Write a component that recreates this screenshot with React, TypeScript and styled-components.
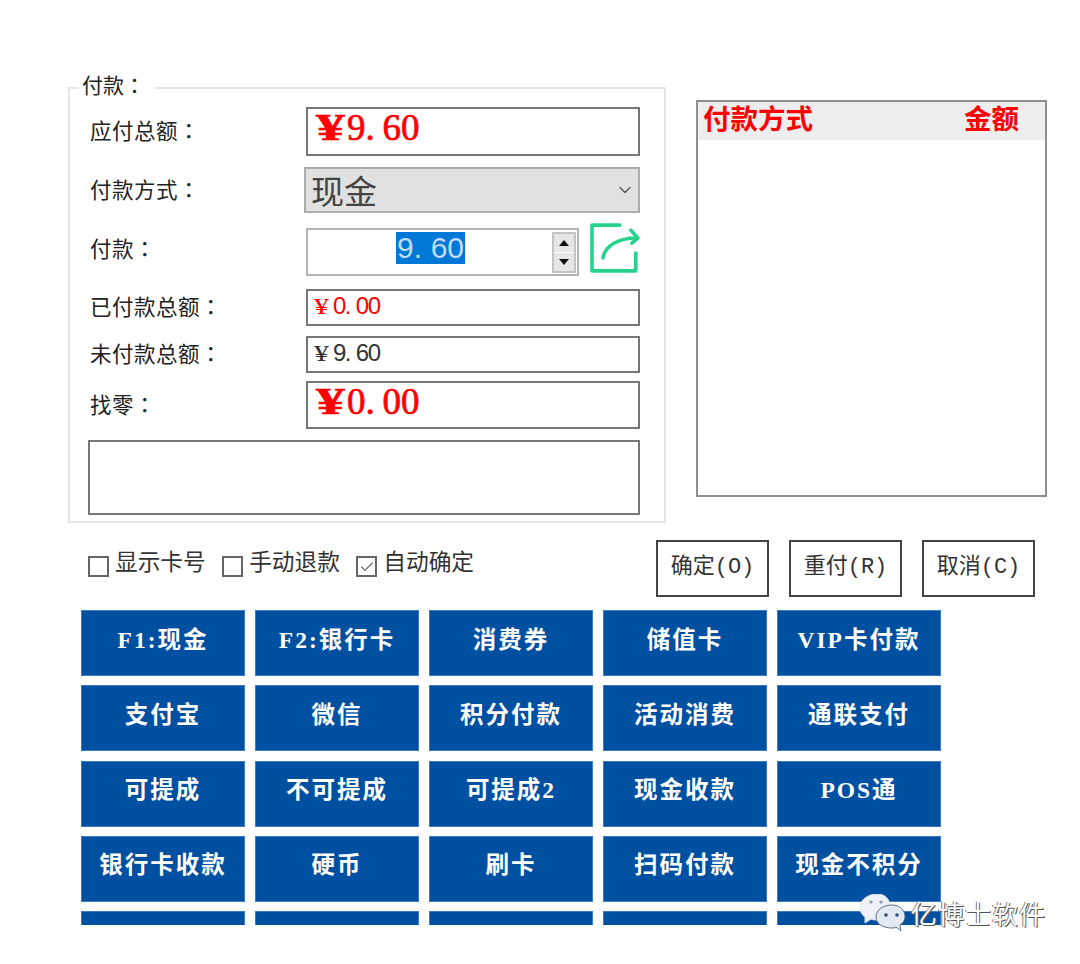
import React from 'react';
import styled, { createGlobalStyle } from 'styled-components';
import { ChevronDown, Check } from 'lucide-react';

const cjk = '"Noto Sans CJK SC", "Liberation Sans", sans-serif';
const cjkTc = '"Noto Sans CJK TC", "Noto Sans CJK SC", sans-serif';

const Global = createGlobalStyle`
  html, body { margin: 0; padding: 0; background: #fff; }
  body { font-family: ${cjk}; color: #222; }
`;

const Page = styled.div`
  position: relative;
  width: 1080px;
  height: 964px;
  overflow: hidden;
  padding: 87px 0 0 68px;
  box-sizing: border-box;
`;
const Top = styled.div`
  display: flex;
  align-items: flex-start;
  gap: 30px;
`;
const Panel = styled.section`
  position: relative;
  width: 598px;
  height: 436px;
  box-sizing: border-box;
  border: 2px solid #e4e4e4;
  padding: 18px 0 0 18px;
`;
const Legend = styled.span`
  position: absolute;
  top: -20px;
  left: 8px;
  padding: 0 11px 0 4px;
  background: #fff;
  font-family: ${cjkTc};
  font-size: 21px;
  line-height: 30px;
`;
const Row = styled.div<{ $h: number; $gap?: number }>`
  display: grid;
  grid-template-columns: 218px 334px;
  align-items: center;
  height: ${p => p.$h}px;
  margin-top: ${p => p.$gap ?? 0}px;
`;
const Label = styled.label`
  padding: 0 0 3px 2px;
  font-family: ${cjkTc};
  font-size: 21.5px;
  line-height: 30px;
  letter-spacing: 0.5px;
  white-space: nowrap;
`;
const Field = styled.div<{ $big?: boolean; $red?: boolean }>`
  height: 100%;
  box-sizing: border-box;
  border: 2px solid #777;
  padding: ${p => (p.$big ? '0 0 0 8px' : '0 0 3px 6px')};
  display: flex;
  align-items: ${p => (p.$big ? 'flex-start' : 'center')};
  color: ${p => (p.$red ? '#ff0000' : '#333')};
  font-family: ${p => (p.$big ? '"Liberation Serif"' : '"Liberation Sans"')}, serif;
  font-weight: 400;
  -webkit-text-stroke: ${p => (p.$big ? '0.7px' : '0')};
  font-size: ${p => (p.$big ? 37 : 24)}px;
  letter-spacing: ${p => (p.$big ? 0 : -1.5)}px;
  line-height: ${p => (p.$big ? 38 : 30)}px;
`;
const Yen = styled.span<{ $big?: boolean }>`
  display: inline-block;
  width: ${p => (p.$big ? 31 : 19)}px;
  font-family: "Liberation Serif", serif;
  font-weight: ${p => (p.$big ? 700 : 400)};
  transform-origin: 0 50%;
  transform: scaleX(${p => (p.$big ? 1.55 : 1.25)});
`;
const Dot = styled.span<{ $w: number }>`
  display: inline-block;
  width: ${p => p.$w}px;
`;
const Select = styled.div`
  height: 100%;
  box-sizing: border-box;
  display: flex;
  align-items: center;
  justify-content: space-between;
  background: #e1e1e1;
  border: 2px solid #adadad;
  margin-left: -2px;
  padding: 0 3px 0 5px;
  font-size: 33px;
  line-height: 40px;
  color: #444;
`;
const SpinWrap = styled.div`
  height: 100%;
  display: flex;
  align-items: flex-start;
  gap: 11px;
`;
const Spin = styled.div`
  width: 274px;
  height: 48px;
  margin-top: 6px;
  box-sizing: border-box;
  border: 2px solid #b4b4b4;
  display: flex;
  align-items: flex-start;
  justify-content: space-between;
  padding: 2px 1px 0 88px;
`;
const Selected = styled.span`
  background: #0078d7;
  color: #c4dcf3;
  font-family: "Liberation Sans", sans-serif;
  font-size: 30px;
  line-height: 32px;
  padding: 0 1px;
`;
const SpinCol = styled.div`
  width: 24px;
  display: flex;
  flex-direction: column;
  gap: 1px;
  border: 2px solid #c4c4c4;
  box-sizing: border-box;
`;
const SpinBtn = styled.div`
  height: 18px;
  background: #e6e6e6;
  display: flex;
  align-items: center;
  justify-content: center;
`;
const Memo = styled.div`
  width: 552px;
  height: 75px;
  margin-top: 11px;
  box-sizing: border-box;
  border: 2px solid #777;
`;
const ListBox = styled.section`
  width: 351px;
  height: 397px;
  margin-top: 13px;
  box-sizing: border-box;
  border: 2px solid #8f8f8f;
`;
const ListHead = styled.div`
  height: 38px;
  background: #eeeeee;
  display: grid;
  grid-template-columns: 261px 1fr;
  padding-left: 5px;
  color: #ff0000;
  font-family: "Noto Sans CJK SC", serif;
  font-weight: 700;
  font-size: 27.5px;
  line-height: 30px;
`;
const Controls = styled.div`
  display: flex;
  justify-content: space-between;
  width: 967px;
  margin-top: 17px;
  padding-left: 20px;
  box-sizing: border-box;
`;
const Checks = styled.div`
  display: flex;
  align-items: flex-start;
  gap: 16.4px;
  padding-top: 5px;
`;
const CheckItem = styled.label`
  display: flex;
  align-items: flex-start;
  gap: 6px;
  font-size: 22.7px;
  line-height: 32px;
  color: #333;
`;
const Box = styled.span`
  width: 21px;
  height: 21px;
  margin-top: 11px;
  box-sizing: border-box;
  border: 2px solid #666;
  display: flex;
  align-items: center;
  justify-content: center;
  color: #777;
`;
const Actions = styled.div`
  display: flex;
  gap: 20px;
`;
const Action = styled.button`
  width: 113px;
  height: 57px;
  box-sizing: border-box;
  border: 2px solid #444;
  background: #fff;
  padding: 0 0 10px;
  font-family: "Liberation Mono", "Noto Sans CJK SC", monospace;
  font-size: 22px;
  color: #333;
`;
const GridClip = styled.div`
  width: 860px;
  height: 315px;
  margin: 13px 0 0 13px;
  overflow: hidden;
`;
const PayGrid = styled.div`
  display: grid;
  grid-template-columns: repeat(5, 164px);
  grid-auto-rows: 66px;
  gap: 9.33px 10px;
`;
const PayButton = styled.button`
  border: 1px solid #3c7cc4;
  background: #0050a2;
  color: #fff;
  padding: 0 0 11px;
  font-family: "Liberation Serif", "Noto Sans CJK SC", serif;
  font-weight: 700;
  font-size: 23.5px;
  letter-spacing: 2px;
  white-space: nowrap;
`;
const Watermark = styled.div`
  position: absolute;
  left: 860px;
  top: 893px;
  display: flex;
  align-items: center;
  gap: 5px;
  color: #fff;
  font-size: 26px;
  line-height: 40px;
  letter-spacing: 1px;
  text-shadow: 1px 1px 0 #555, -1px 0 0 #777;
`;

const Amount: React.FC<{ text: string; big?: boolean }> = ({ text, big }) => {
  const [a, b] = text.split('.');
  return (
    <>
      <Yen $big={big}>¥</Yen>
      {a}
      <Dot $w={big ? 17 : 11}>.</Dot>
      {b}
    </>
  );
};

const Share = () => (
  <svg width="50" height="52" viewBox="0 0 50 52" fill="none" stroke="#27d38c" strokeWidth="3.6" strokeLinecap="round" strokeLinejoin="round">
    <path d="M30 3H2V49H46V31" />
    <path d="M13 36C15 24 28 16 47 16" />
    <path d="M41 8L48 16L42 21" />
  </svg>
);

const WeChat = () => (
  <svg width="46" height="38" viewBox="0 0 46 38">
    <path d="M17 0C8 0 0 6 0 13C0 18 2 21 5 23L5 29L11 25C13 26 15 26 17 26C26 26 30 19 30 13C30 6 26 0 17 0Z" fill="#eef1f6" stroke="#d8dfea" />
    <path d="M32 11C23 11 16 16 16 23C16 30 23 34 32 34C33 34 35 34 36 33L41 37L40 31C43 29 45 26 45 23C45 16 40 11 32 11Z" fill="#e2e9f3" stroke="#5f6f86" strokeWidth="1" />
    <circle cx="26" cy="21" r="1.8" fill="#30507c" />
    <circle cx="37" cy="21" r="1.8" fill="#30507c" />
    <circle cx="11" cy="8" r="1.6" fill="#8a97aa" />
    <circle cx="21" cy="8" r="1.6" fill="#8a97aa" />
  </svg>
);

const Arrow = ({ up }: { up?: boolean }) => (
  <svg width="10" height="6" viewBox="0 0 10 6">
    <path d={up ? 'M5 0L10 6H0Z' : 'M0 0H10L5 6Z'} fill="#111" />
  </svg>
);

const labels = [
  'F1:现金', 'F2:银行卡', '消费券', '储值卡', 'VIP卡付款',
  '支付宝', '微信', '积分付款', '活动消费', '通联支付',
  '可提成', '不可提成', '可提成2', '现金收款', 'POS通',
  '银行卡收款', '硬币', '刷卡', '扫码付款', '现金不积分',
  '', '', '', '', '',
];

export default function App() {
  return (
    <Page>
      <Global />
      <Top>
        <Panel>
          <Legend>付款：</Legend>
          <Row $h={49}>
            <Label>应付总额：</Label>
            <Field $big $red><Amount text="9.60" big /></Field>
          </Row>
          <Row $h={46} $gap={11}>
            <Label>付款方式：</Label>
            <Select>现金<ChevronDown size={20} color="#555" strokeWidth={1.5} /></Select>
          </Row>
          <Row $h={54} $gap={9}>
            <Label>付款：</Label>
            <SpinWrap>
              <Spin>
                <Selected>9<Dot $w={17}>.</Dot>60</Selected>
                <SpinCol>
                  <SpinBtn><Arrow up /></SpinBtn>
                  <SpinBtn><Arrow /></SpinBtn>
                </SpinCol>
              </Spin>
              <Share />
            </SpinWrap>
          </Row>
          <Row $h={37} $gap={13}>
            <Label>已付款总额：</Label>
            <Field $red><Amount text="0.00" /></Field>
          </Row>
          <Row $h={37} $gap={10}>
            <Label>未付款总额：</Label>
            <Field><Amount text="9.60" /></Field>
          </Row>
          <Row $h={48} $gap={8}>
            <Label>找零：</Label>
            <Field $big $red><Amount text="0.00" big /></Field>
          </Row>
          <Memo />
        </Panel>
        <ListBox>
          <ListHead><span>付款方式</span><span>金额</span></ListHead>
        </ListBox>
      </Top>
      <Controls>
        <Checks>
          <CheckItem><Box />显示卡号</CheckItem>
          <CheckItem><Box />手动退款</CheckItem>
          <CheckItem><Box><Check size={16} strokeWidth={2} /></Box>自动确定</CheckItem>
        </Checks>
        <Actions>
          <Action>确定(O)</Action>
          <Action>重付(R)</Action>
          <Action>取消(C)</Action>
        </Actions>
      </Controls>
      <GridClip>
        <PayGrid>
          {labels.map((l, i) => <PayButton key={i}>{l}</PayButton>)}
        </PayGrid>
      </GridClip>
      <Watermark><WeChat />亿博士软件</Watermark>
    </Page>
  );
}
